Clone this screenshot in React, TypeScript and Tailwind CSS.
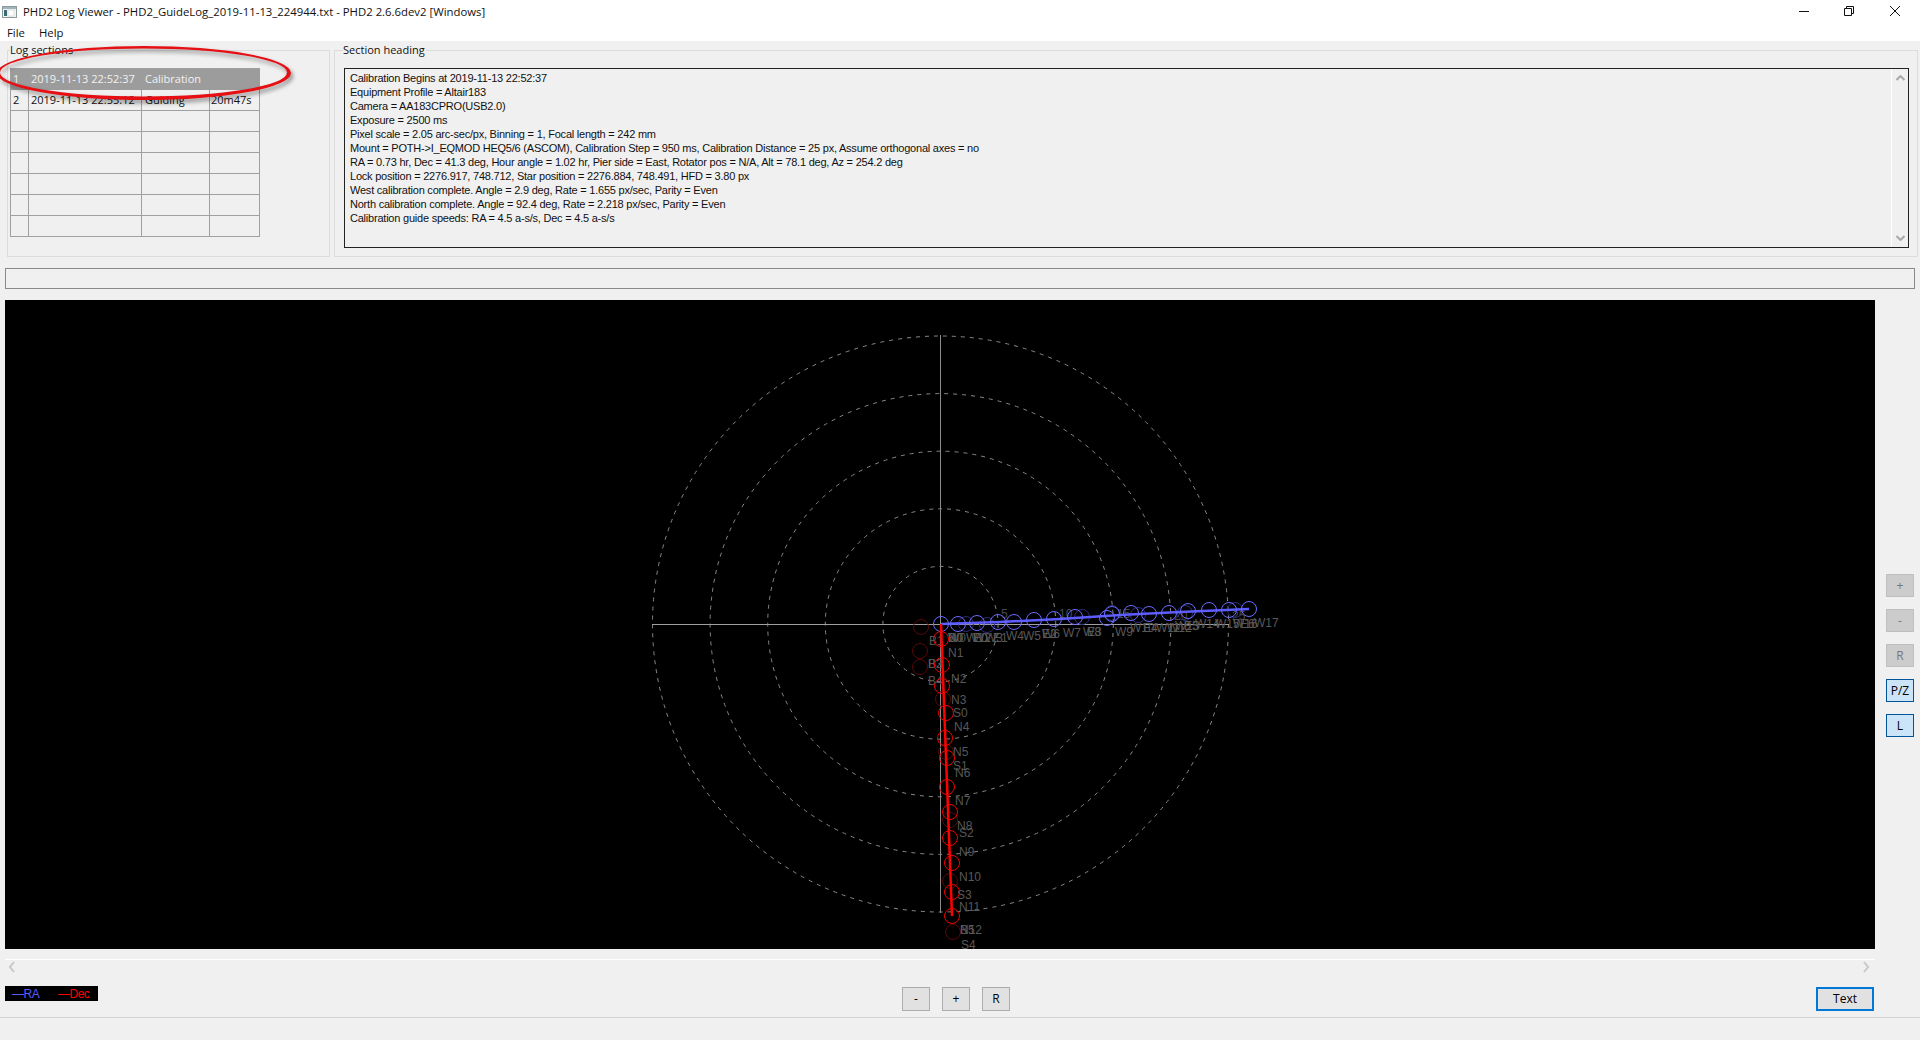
const ui = '"Open Sans","Noto Sans",sans-serif';

const rows = [
  ['1', '2019-11-13 22:52:37', 'Calibration', ''],
  ['2', '2019-11-13 22:55:12', 'Guiding', '20m47s'],
  ['', '', '', ''],
  ['', '', '', ''],
  ['', '', '', ''],
  ['', '', '', ''],
  ['', '', '', ''],
  ['', '', '', ''],
];

const heading = [
  'Calibration Begins at 2019-11-13 22:52:37',
  'Equipment Profile = Altair183',
  'Camera = AA183CPRO(USB2.0)',
  'Exposure = 2500 ms',
  'Pixel scale = 2.05 arc-sec/px, Binning = 1, Focal length = 242 mm',
  'Mount = POTH->I_EQMOD HEQ5/6 (ASCOM), Calibration Step = 950 ms, Calibration Distance = 25 px, Assume orthogonal axes = no',
  'RA = 0.73 hr, Dec = 41.3 deg, Hour angle = 1.02 hr, Pier side = East, Rotator pos = N/A, Alt = 78.1 deg, Az = 254.2 deg',
  'Lock position = 2276.917, 748.712, Star position = 2276.884, 748.491, HFD = 3.80 px',
  'West calibration complete. Angle = 2.9 deg, Rate = 1.655 px/sec, Parity = Even',
  'North calibration complete. Angle = 92.4 deg, Rate = 2.218 px/sec, Parity = Even',
  'Calibration guide speeds: RA = 4.5 a-s/s, Dec = 4.5 a-s/s',
];

const cx = 940.5;
const cy = 624;
const blue = [[941,624],[958,624],[977,623],[998,622],[1014,622],[1034,620],[1054,619],[1075,617],[1107,618],[1112,614],[1131,613],[1149,614],[1169,613],[1188,611],[1209,610],[1229,610],[1249,609]];
const blueFaint = [[966,624],[987,625],[1082,617],[1112,613],[1138,615],[1185,613],[1235,610]];
const red = [[941,639],[942,665],[942,686],[946,713],[945,738],[947,758],[947,787],[950,812],[950,838],[952,863],[952,892],[952,916]];
const redFaint = [[921,627],[920,651],[920,667],[943,699],[946,752],[950,820],[950,881],[953,932]];

const labels: [string, number, number][] = [
  ['B1',929,645],['B0',948,642],['W0',948,642],['W1',966,642],['E0',973,642],['W2',973,642],['W3',985,642],['E1',993,642],
  ['W4',1006,640],['W5',1023,640],['E2',1042,638],['W6',1042,638],['W7',1063,637],['W8',1083,636],['E3',1087,636],
  ['W9',1115,636],['W10',1130,632],['E4',1143,632],['W11',1156,632],['W12',1167,632],['W13',1175,630],['E5',1184,630],
  ['W14',1195,628],['W15',1215,628],['W16',1233,628],['E6',1240,628],['W17',1254,627],
  ['N0',948,642],['N1',948,657],['B3',928,668],['B2',928,668],['N2',951,683],['B4',928,685],['N3',951,704],['S0',953,717],
  ['N4',954,731],['N5',953,756],['S1',953,770],['N6',955,777],['N7',955,805],['N8',957,830],['S2',959,837],['N9',959,856],
  ['N10',959,881],['S3',957,899],['N11',959,911],['N12',960,934],['B5',960,934],['S4',961,949],
];

const scaleLabels: [string, number, number][] = [['5',1001,618],['10',1059,618],['15',1117,618],['20',1174,620],['25',1232,620]];

function Plot() {
  return (
    <svg width="1870" height="649" className="block" style={{ fontFamily: '"Liberation Sans",sans-serif' }}>
      <g transform="translate(-5 -300)">
        {[57.6, 115.2, 172.8, 230.4, 288].map((r) => (
          <circle key={r} cx={cx} cy={cy} r={r} fill="none" stroke="#8a8a8a" strokeWidth="1" strokeDasharray="4 5" />
        ))}
        <line x1="652" y1={cy + 0.5} x2="1229" y2={cy + 0.5} stroke="#a0a0a0" />
        <line x1={cx} y1="335" x2={cx} y2="913" stroke="#8c8c8c" />
        {scaleLabels.map(([t, x, y]) => (
          <text key={t} x={x} y={y} fontSize="12" fill="#4a4a4a">{t}</text>
        ))}
        {blueFaint.map(([x, y], i) => (
          <circle key={i} cx={x} cy={y} r="7.5" fill="none" stroke="#2c2c78" />
        ))}
        {redFaint.map(([x, y], i) => (
          <circle key={i} cx={x} cy={y} r="7.5" fill="none" stroke="#5a0808" />
        ))}
        {labels.map(([t, x, y], i) => (
          <text key={i} x={x} y={y} fontSize="12" fill="#585858">{t}</text>
        ))}
        <polyline points="941,624 1000,622 1060,619 1120,615 1180,612 1249,609" fill="none" stroke="#5c5cff" strokeWidth="2.5" />
        {blue.map(([x, y], i) => (
          <circle key={i} cx={x} cy={y} r="7.5" fill="none" stroke="#6a6aff" />
        ))}
        <polyline points="941,624 952,916" fill="none" stroke="#ff0000" strokeWidth="2.5" />
        {red.map(([x, y], i) => (
          <circle key={i} cx={x} cy={y} r="7.5" fill="none" stroke="#f00000" />
        ))}
      </g>
    </svg>
  );
}

function GroupLabel({ children, wide }: { children: string; wide?: boolean }) {
  return (
    <span
      className={
        wide
          ? 'absolute left-[8px] top-[-9px] bg-[#f0f0f0] pr-[1px] text-[11px] leading-[16px] text-[#111]'
          : 'absolute left-[2px] top-[-9px] bg-[#f0f0f0] pr-[1px] text-[11px] leading-[16px] text-[#111]'
      }
      style={{ fontFamily: ui }}
    >
      {children}
    </span>
  );
}

function SideButton({ label, active }: { label: string; active?: boolean }) {
  return (
    <div
      className={
        active
          ? 'flex h-[23px] w-[28px] items-center justify-center border border-[#005499] bg-[#cce4f7] text-[12px] text-black'
          : 'flex h-[23px] w-[28px] items-center justify-center border border-[#bfbfbf] bg-[#cccccc] text-[12px] text-[#777]'
      }
    >
      {label}
    </div>
  );
}

function SmallButton({ label }: { label: string }) {
  return (
    <div className="flex h-[24px] w-[28px] items-center justify-center border border-[#adadad] bg-[#e1e1e1] text-[12px] text-black">
      {label}
    </div>
  );
}

export default function App() {
  return (
    <div className="relative flex h-[1040px] w-[1920px] flex-col overflow-hidden bg-[#f0f0f0]" style={{ fontFamily: ui }}>
      {/* title bar */}
      <div className="flex h-[24px] items-center bg-white text-[11.35px] text-[#111]">
        <svg width="15" height="12" viewBox="0 0 15 12" className="ml-[2px] mr-[6px]">
          <rect x="0.5" y="0.5" width="14" height="11" fill="#f4f4f4" stroke="#8a9a9a" />
          <rect x="1" y="1" width="13" height="2" fill="#9fb4bb" />
          <rect x="2" y="4" width="3" height="6" fill="#3a6a72" />
          <rect x="6" y="4" width="6" height="6" fill="#ffffff" stroke="#c4c4c4" strokeWidth="0.5" />
        </svg>
        <span>PHD2 Log Viewer - PHD2_GuideLog_2019-11-13_224944.txt - PHD2 2.6.6dev2 [Windows]</span>
        <div className="ml-auto flex items-center pb-[2px]">
          <svg width="10" height="10" viewBox="0 0 10 10" className="mr-[35px]">
            <line x1="0" y1="5.5" x2="10" y2="5.5" stroke="#111" />
          </svg>
          <svg width="10" height="10" viewBox="0 0 10 10" className="mr-[36px]">
            <path d="M2.5 2.5V0.5H9.5V7.5H7.5M0.5 2.5H7.5V9.5H0.5Z" fill="none" stroke="#111" />
          </svg>
          <svg width="10" height="10" viewBox="0 0 10 10" className="mr-[20px]">
            <path d="M0 0L10 10M10 0L0 10" fill="none" stroke="#111" />
          </svg>
        </div>
      </div>

      {/* menu */}
      <div className="flex h-[17px] items-center gap-[14px] bg-white pl-[7px] text-[11.35px] text-[#111]">
        <span>File</span>
        <span>Help</span>
      </div>

      {/* top groups */}
      <div className="flex h-[217px] gap-[4px] pl-[7px] pr-[2px] pt-[9px]">
        <div className="relative h-[207px] w-[323px] shrink-0 border border-[#dcdcdc] pl-[2px] pt-[17px]">
          <GroupLabel>Log sections</GroupLabel>
          <div className="w-[250px] border-l border-t border-[#a0a0a0] text-[11px]">
            {rows.map((r, i) => (
              <div
                key={i}
                className={
                  i === 0
                    ? 'flex h-[21px] items-center bg-[#9c9c9c] text-[#f2f2f2]'
                    : 'flex h-[21px] items-center border-b border-r border-[#a0a0a0] text-[#111]'
                }
              >
                <div className={i === 0 ? 'h-full w-[18px] pl-[2px] leading-[19px]' : 'h-full w-[18px] border-r border-[#a0a0a0] pl-[2px] leading-[19px]'}>{r[0]}</div>
                <div className={i === 0 ? 'h-full w-[113px] pl-[2px] leading-[19px] whitespace-nowrap' : 'h-full w-[113px] border-r border-[#a0a0a0] pl-[2px] leading-[19px] whitespace-nowrap'}>{r[1]}</div>
                <div className={i === 0 ? 'h-full w-[68px] pl-[3px] leading-[19px]' : 'h-full w-[68px] border-r border-[#a0a0a0] pl-[3px] leading-[19px]'}>{r[2]}</div>
                <div className="h-full flex-1 pl-[1px] leading-[19px]">{r[3]}</div>
              </div>
            ))}
          </div>
        </div>
        <div className="relative h-[207px] flex-1 border border-[#dcdcdc] pl-[9px] pr-[8px] pt-[17px]">
          <GroupLabel wide>Section heading</GroupLabel>
          <div className="relative h-[180px] border border-[#222] pl-[5px] pt-[2px]">
            {heading.map((l) => (
              <div key={l} className="h-[14px] whitespace-nowrap text-[11px] leading-[14px] tracking-[-0.22px] text-[#111]" style={{ fontFamily: '"Liberation Sans",sans-serif' }}>
                {l}
              </div>
            ))}
            <div className="absolute bottom-0 right-0 top-0 flex w-[17px] flex-col items-center justify-between border-l border-[#ffffff] py-[6px]">
              <svg width="9" height="6" viewBox="0 0 9 6"><path d="M0.5 5L4.5 1L8.5 5" fill="none" stroke="#a8a8a8" strokeWidth="2" /></svg>
              <svg width="9" height="6" viewBox="0 0 9 6"><path d="M0.5 1L4.5 5L8.5 1" fill="none" stroke="#a8a8a8" strokeWidth="2" /></svg>
            </div>
          </div>
        </div>
      </div>

      {/* empty progress strip */}
      <div className="ml-[5px] mt-[10px] h-[21px] w-[1910px] border border-[#8a8a8a]" />

      {/* plot + side buttons */}
      <div className="mt-[11px] flex h-[649px]">
        <div className="ml-[5px] h-[649px] w-[1870px] shrink-0 overflow-hidden bg-black">
          <Plot />
        </div>
        <div className="ml-[11px] flex flex-col gap-[12px] pt-[274px]">
          <SideButton label="+" />
          <SideButton label="-" />
          <SideButton label="R" />
          <SideButton label="P/Z" active />
          <SideButton label="L" active />
        </div>
      </div>

      {/* horizontal scrollbar */}
      <div className="ml-[5px] mt-[10px] h-[21px] w-[1870px] border-t border-white">
        <div className="flex items-center justify-between px-[3px] pt-[1px]">
          <svg width="8" height="12" viewBox="0 0 8 12"><path d="M6 1L2 6L6 11" fill="none" stroke="#c8c8c8" strokeWidth="2" /></svg>
          <svg width="8" height="12" viewBox="0 0 8 12" className="mr-[2px]"><path d="M2 1L6 6L2 11" fill="none" stroke="#c8c8c8" strokeWidth="2" /></svg>
        </div>
      </div>

      {/* bottom controls */}
      <div className="flex h-[37px] items-start pl-[5px]">
        <div className="mt-[6px] flex h-[15px] w-[93px] items-center bg-black pl-[7px] text-[12px] tracking-[-0.5px]" style={{ fontFamily: '"Liberation Sans",sans-serif' }}>
          <span className="w-[46px] text-[#5a5aff]">—RA</span>
          <span className="text-[#ff0000]">—Dec</span>
        </div>
        <div className="ml-[804px] mt-[7px] flex gap-[12px]">
          <SmallButton label="-" />
          <SmallButton label="+" />
          <SmallButton label="R" />
        </div>
        <div className="ml-[806px] mt-[7px] flex h-[24px] w-[58px] items-center justify-center border-2 border-[#0078d7] bg-[#e1e1e1] text-[12px] text-black">
          Text
        </div>
      </div>

      {/* status bar */}
      <div className="flex-1 border-t border-[#d4d4d4]" />

      {/* hand-drawn annotation */}
      <svg width="310" height="70" className="pointer-events-none absolute left-0 top-[40px]" style={{ filter: 'drop-shadow(2px 3px 2px rgba(0,0,0,0.45))' }}>
        <path
          fillRule="evenodd"
          fill="#e60f14"
          d="M-3 33A147 27 0 1 0 291 33A147 27 0 1 0 -3 33ZM0 32.5A143.5 24 0 1 0 287 32.5A143.5 24 0 1 0 0 32.5Z"
        />
      </svg>
    </div>
  );
}
